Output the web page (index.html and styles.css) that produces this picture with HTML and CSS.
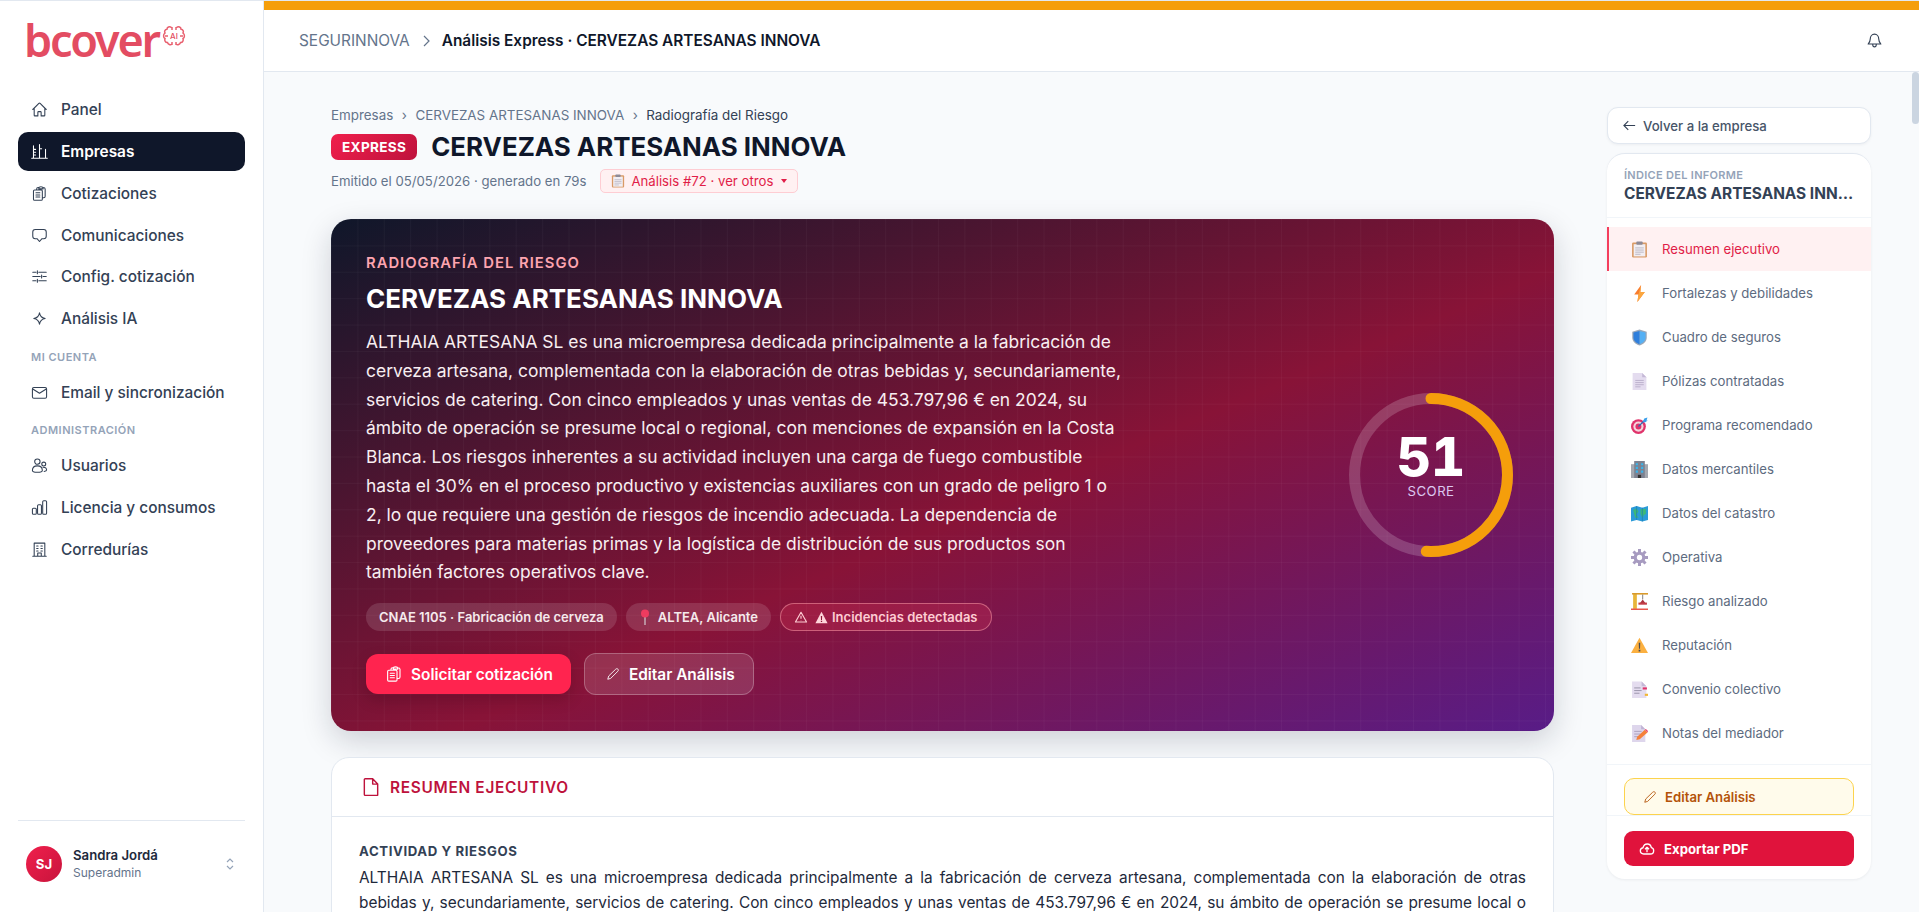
FILE: index.html
```html
<!DOCTYPE html>
<html lang="es">

<head>
    <meta charset="utf-8">
    <meta name="viewport" content="width=device-width, initial-scale=1.0">
    <title>bcover - Radiografía del Riesgo</title>
    <link rel="stylesheet" href="styles.css">
</head>

<body>
    <svg class="defs" width="0" height="0">
        <symbol id="i-home" viewBox="0 0 24 24"><path d="M2.5 12l8.6-8.6c.5-.5 1.3-.5 1.8 0l8.6 8.6M4.5 10v10c0 .6.5 1 1 1h4.2v-5c0-.6.5-1 1-1h2.6c.5 0 1 .4 1 1v5h4.200c.5 0 1-.4 1-1V10"/></symbol>
        <symbol id="i-empresas" viewBox="0 0 24 24"><path d="M1 21.500h22M3.500 21V4M12 21V2M20.500 21V9M3.500 9h3M3.500 13h3M3.500 17h3M12 8h3"/></symbol>
        <symbol id="i-cotiza" viewBox="0 0 24 24"><path d="M8 7V5.500C8 4.400 8.800 3.700 10 3.600h1M17 3.600c1.400.1 3 .7 3 2V16c0 1.200-1 2-2 2h-2M11 4.500C11 3 12 2.500 14 2.500s3 .5 3 2v1h-6zM5 7h9.500c.8 0 1.500.7 1.500 1.500V20c0 .8-.7 1.500-1.500 1.500H5c-.8 0-1.500-.7-1.500-1.500V8.500C3.500 7.700 4.200 7 5 7zM7 11h5.500M7 14h5.500M7 17h5.500"/></symbol>
        <symbol id="i-chat" viewBox="0 0 24 24"><path d="M6 3.500h12c2.200 0 3.500 1.400 3.500 3.500v6c0 2.100-1.300 3.500-3.500 3.500h-2.500L12 20.500l-3.500-4H6c-2.200 0-3.500-1.400-3.500-3.500V7c0-2.100 1.300-3.500 3.500-3.500z"/></symbol>
        <symbol id="i-sliders" viewBox="0 0 24 24"><path d="M11 6h10.500M2.500 6H7M17 12h4.500M2.500 12H13M11 18h10.500M2.500 18H7M9 4v4M15 10v4M9 16v4"/></symbol>
        <symbol id="i-spark" viewBox="0 0 24 24"><path d="M12 4c.8 4.800 3.200 7.200 8 8-4.800.8-7.200 3.200-8 8-.8-4.800-3.200-7.200-8-8 4.800-.8 7.200-3.200 8-8z"/></symbol>
        <symbol id="i-mail" viewBox="0 0 24 24"><rect x="2" y="5" width="20" height="15" rx="2"/><path d="M2.500 7l9.500 6 9.500-6"/></symbol>
        <symbol id="i-users" viewBox="0 0 24 24"><circle cx="9" cy="6.500" r="3.800"/><circle cx="18" cy="10" r="2.800"/><path d="M2 19c0-4 3-6.500 7-6.500s7 2.500 7 6.500c0 1.500-3 2.500-7 2.500S2 20.500 2 19zM17 14.500c3 0 5 1.500 5 4 0 1-1.200 1.800-3.500 2"/></symbol>
        <symbol id="i-bars" viewBox="0 0 24 24"><rect x="2" y="13" width="5.500" height="8.500" rx="1.500"/><rect x="9.250" y="8" width="5.500" height="13.500" rx="1.500"/><rect x="16.500" y="2.500" width="5.500" height="19" rx="1.500"/></symbol>
        <symbol id="i-office" viewBox="0 0 24 24"><path d="M2.500 21.500h19M4.500 21.500V3h15v18.500M9.500 21.500V17h5v4.500M8 7h2M14 7h2M8 10.500h2M14 10.500h2M8 14h2M14 14h2"/></symbol>
        <symbol id="i-pencil" viewBox="0 0 24 24"><path d="M16.800 3.600c1-1 2.600-1 3.600 0s1 2.600 0 3.600L8 19.500l-5 1.500 1.500-5z"/></symbol>

        <symbol id="e-clipboard" viewBox="0 0 16 16"><rect x="1" y="1.500" width="14" height="14" rx="1.200" fill="#d99a66"/><rect x="2.500" y="3" width="11" height="11.500" fill="#f1eef3"/><rect x="5" y=".5" width="6" height="3" rx=".8" fill="#8d8a96"/><path d="M4 6.500h8M4 8.500h8M4 10.500h8M4 12.500h5" stroke="#b5b0bd" stroke-width=".8"/></symbol>
        <symbol id="e-bolt" viewBox="0 0 16 16"><path d="M9.500 0L3 9h4l-1 7 7-9.500H8.800z" fill="#f97d2e"/><path d="M9.500 0L7 9l-1 7 7-9.500H8.800z" fill="#fba73f"/></symbol>
        <symbol id="e-shield" viewBox="0 0 16 16"><path d="M8 .5L14.800 2.500V8c0 3.800-3 6.300-6.800 7.500C4.200 14.300 1.200 11.800 1.200 8V2.500z" fill="#9aa7b8"/><path d="M8 1.800L13.700 3.400V8c0 3-2.500 5.200-5.700 6.300z" fill="#55b0f4"/><path d="M8 1.800L2.300 3.400V8c0 3 2.500 5.200 5.700 6.300z" fill="#2f7fdc"/></symbol>
        <symbol id="e-page" viewBox="0 0 16 16"><path d="M1.500 0H10.500L14.500 4V16H1.500z" fill="#e4dcef"/><path d="M10.500 0L14.500 4H10.500z" fill="#c4b8d6"/><path d="M4 7h8M4 9h8M4 11h8M4 13h5" stroke="#b6abc7" stroke-width=".8"/></symbol>
        <symbol id="e-target" viewBox="0 0 16 16"><circle cx="7" cy="9" r="7" fill="#e0336b"/><circle cx="7" cy="9" r="4.800" fill="#f3d5dc"/><circle cx="7" cy="9" r="2.800" fill="#e0336b"/><path d="M7 9L14 2" stroke="#2c6fb8" stroke-width="1.200"/><path d="M12.500 1.500L15.500 .5 14.500 3.500 16 3 13.500 5 11 5z" fill="#3aa0ea"/></symbol>
        <symbol id="e-building" viewBox="0 0 16 16"><rect x="0" y="3" width="16" height="13" fill="#a4a8b0"/><rect x="3" y="0" width="10" height="16" fill="#7d8290"/><path d="M4.500 2h2v2h-2zM9.500 2h2v2h-2zM4.500 5.500h2v2h-2zM9.500 5.500h2v2h-2zM4.500 9h2v2h-2zM9.500 9h2v2h-2z" fill="#37b5ee"/><rect x="6.500" y="13" width="3" height="3" fill="#333"/></symbol>
        <symbol id="e-map" viewBox="0 0 16 16"><path d="M0 2.500L5.300 1 10.700 2.500 16 1V14L10.700 15.500 5.300 14 0 15.500z" fill="#2b9bd8"/><path d="M2 5l3-2 2 3-2 3 2 3-3 0zM9 4l5-.5 0 5-2 1-1 3-2-4z" fill="#3cb878"/><path d="M5.300 1V14M10.700 2.500V15.500" stroke="#1c78b0" stroke-width=".6"/></symbol>
        <symbol id="e-gear" viewBox="0 0 16 16"><circle cx="8" cy="8" r="5.500" fill="#a79bc0"/><path d="M8 0v16M0 8h16M2.300 2.300l11.400 11.400M13.700 2.300L2.300 13.700" stroke="#a79bc0" stroke-width="2.800"/><circle cx="8" cy="8" r="2.500" fill="#fff"/></symbol>
        <symbol id="e-crane" viewBox="0 0 16 16"><rect x="2" y="1" width="3.500" height="14" fill="#e8b53a"/><rect x="1" y="0" width="15" height="1.500" fill="#d99a2b"/><rect x="0" y="14.600" width="16" height="1.400" fill="#e8564c"/><path d="M11 1.500V6" stroke="#555" stroke-width=".7"/><path d="M8 10l3-4 3 4z" fill="#a8323e"/><rect x="7" y="9" width="8" height="2" fill="#c43c46"/></symbol>
        <symbol id="e-warn" viewBox="0 0 16 16"><path d="M8 .8L16 15H0z" fill="#fbb040"/><path d="M7.300 5.500h1.400l-.2 5.500h-1zM7.200 12h1.600v1.600H7.200z" fill="#4a4a52"/></symbol>
        <symbol id="e-ribbon" viewBox="0 0 16 16"><path d="M1 .5H10L14.500 5V16H1z" fill="#e4dcef"/><path d="M10 .5L14.500 5H10z" fill="#c4b8d6"/><path d="M3 6.500h6M3 9h7M3 11.500h5" stroke="#8f8aa0" stroke-width=".8"/><rect x="11" y="6" width="4" height="2" fill="#e0336b"/><rect x="13" y="12" width="3" height="2" fill="#f2b632"/></symbol>
        <symbol id="e-memo" viewBox="0 0 16 16"><path d="M1 0H9.500L13.500 4V16H1z" fill="#ded6ec"/><path d="M9.500 0L13.500 4H9.500z" fill="#c0b3d4"/><path d="M3 6h7M3 8.500h6M3 11h4" stroke="#a49ab8" stroke-width=".8"/><path d="M5 14l.8-3L13 4.500l2.500 2.500-7.300 6.500z" fill="#f5813a"/><path d="M13 4.500l1-.8 2 2-.5 1.300z" fill="#e8456b"/></symbol>
    </svg>

    <div class="app">
        <aside class="sidebar">
            <div class="logo">
                <span class="logo-text">bcover</span>
                <span class="logo-brain">
                    <svg viewBox="0 0 24 24">
                        <path d="M9.500 3.500C7.500 2 5 3 5 5.200 3 5.500 2 7.500 3 9 1 10.500 1.200 13.500 3 14.500 2.200 16.500 3.500 18.800 5.500 18.500 6 20.500 8.500 21.500 10 20M14.500 3.500C16.500 2 19 3 19 5.200 21 5.500 22 7.500 21 9 23 10.500 22.800 13.500 21 14.500 21.800 16.500 20.500 18.800 18.500 18.500 18 20.500 15.500 21.500 14 20M10 3v3M14 3v3M3 12h3M18 12h3M10 18v3M14 18v3"/>
                    </svg>
                    <b>AI</b>
                </span>
            </div>

            <nav class="menu">
                <a class="menu-item"><svg class="ico"><use href="#i-home"/></svg>Panel</a>
                <a class="menu-item activo"><svg class="ico"><use href="#i-empresas"/></svg>Empresas</a>
                <a class="menu-item"><svg class="ico"><use href="#i-cotiza"/></svg>Cotizaciones</a>
                <a class="menu-item"><svg class="ico"><use href="#i-chat"/></svg>Comunicaciones</a>
                <a class="menu-item"><svg class="ico"><use href="#i-sliders"/></svg>Config. cotización</a>
                <a class="menu-item"><svg class="ico"><use href="#i-spark"/></svg>Análisis IA</a>
                <p class="menu-titulo">MI CUENTA</p>
                <a class="menu-item"><svg class="ico"><use href="#i-mail"/></svg>Email y sincronización</a>
                <p class="menu-titulo">ADMINISTRACIÓN</p>
                <a class="menu-item"><svg class="ico"><use href="#i-users"/></svg>Usuarios</a>
                <a class="menu-item"><svg class="ico"><use href="#i-bars"/></svg>Licencia y consumos</a>
                <a class="menu-item"><svg class="ico"><use href="#i-office"/></svg>Corredurías</a>
            </nav>

            <div class="usuario">
                <span class="avatar">SJ</span>
                <div class="usuario-datos">
                    <strong>Sandra Jordá</strong>
                    <span>Superadmin</span>
                </div>
                <svg class="selector" viewBox="0 0 10 16"><path d="M2 6l3-3 3 3M2 10l3 3 3-3"/></svg>
            </div>
        </aside>

        <div class="principal">
            <div class="franja"></div>
            <header class="topbar">
                <span class="top-org">SEGURINNOVA</span>
                <svg class="top-sep" viewBox="0 0 10 14"><path d="M3 2l5 5-5 5"/></svg>
                <span class="top-titulo">Análisis Express · CERVEZAS ARTESANAS INNOVA</span>
                <svg class="campana" viewBox="0 0 24 24"><path d="M6 10c0-4 2.500-7 6-7s6 3 6 7c0 3 1 5 3 7H3c2-2 3-4 3-7zM9.500 17.500c0 2 1 3.500 2.500 3.500s2.500-1.500 2.500-3.500"/></svg>
            </header>

            <div class="zona">
                <main class="contenido">
                    <div class="migas">
                        <span>Empresas</span><i>›</i><span>CERVEZAS ARTESANAS INNOVA</span><i>›</i><span class="miga-actual">Radiografía del Riesgo</span>
                    </div>
                    <div class="cabecera">
                        <span class="badge">EXPRESS</span>
                        <h1>CERVEZAS ARTESANAS INNOVA</h1>
                    </div>
                    <div class="meta">
                        <span>Emitido el 05/05/2026 · generado en 79s</span>
                        <span class="meta-pill"><svg class="emoji"><use href="#e-clipboard"/></svg>Análisis #72 · ver otros<i class="flechita"></i></span>
                    </div>

                    <section class="hero">
                        <div class="hero-texto">
                            <p class="hero-eyebrow">RADIOGRAFÍA DEL RIESGO</p>
                            <h2>CERVEZAS ARTESANAS INNOVA</h2>
                            <p class="hero-resumen">ALTHAIA ARTESANA SL es una microempresa dedicada principalmente a la fabricación de cerveza artesana, complementada con la elaboración de otras bebidas y, secundariamente, servicios de catering. Con cinco empleados y unas ventas de 453.797,96 € en 2024, su ámbito de operación se presume local o regional, con menciones de expansión en la Costa Blanca. Los riesgos inherentes a su actividad incluyen una carga de fuego combustible hasta el 30% en el proceso productivo y existencias auxiliares con un grado de peligro 1 o 2, lo que requiere una gestión de riesgos de incendio adecuada. La dependencia de proveedores para materias primas y la logística de distribución de sus productos son también factores operativos clave.</p>
                            <div class="chips">
                                <span class="chip">CNAE 1105 · Fabricación de cerveza</span>
                                <span class="chip chip-lugar"><svg class="chip-pin" viewBox="0 0 12 16"><path d="M6 8v8" stroke="#cbb6bd" stroke-width="1.400"/><circle cx="6" cy="4.500" r="4" fill="#ee3b5f"/></svg>ALTEA, Alicante</span>
                                <span class="chip chip-alerta">
                                    <svg class="chip-tri" viewBox="0 0 24 24"><path d="M12 4l9.500 16.500h-19zM12 10v5M12 17.500v.5"/></svg>
                                    <svg class="chip-warn" viewBox="0 0 16 16"><path d="M8 1l7.500 14H.5z" fill="#ffd5da"/><path d="M7.200 6h1.600l-.2 5H7.400zM7.200 12h1.600v1.500H7.200z" fill="#8a1535"/></svg>
                                    Incidencias detectadas
                                </span>
                            </div>
                            <div class="acciones">
                                <a class="btn-rojo"><svg class="ico"><use href="#i-cotiza"/></svg>Solicitar cotización</a>
                                <a class="btn-vidrio"><svg class="ico"><use href="#i-pencil"/></svg>Editar Análisis</a>
                            </div>
                        </div>
                        <div class="score">
                            <svg viewBox="0 0 164 164">
                                <circle class="score-fondo" cx="82" cy="82" r="76.500"/>
                                <circle class="score-valor" cx="82" cy="82" r="76.500" pathLength="100" stroke-dasharray="51 100" transform="rotate(-90 82 82)"/>
                            </svg>
                            <div class="score-texto">
                                <strong>51</strong>
                                <span>SCORE</span>
                            </div>
                        </div>
                    </section>

                    <section class="tarjeta">
                        <div class="tarjeta-cab">
                            <svg viewBox="0 0 24 24"><path d="M5 2h9l6 6.500V22H5c-.6 0-1-.4-1-1V3c0-.6.4-1 1-1zM14 2v6.500h6"/></svg>
                            <h3>RESUMEN EJECUTIVO</h3>
                        </div>
                        <div class="tarjeta-cuerpo">
                            <h4>ACTIVIDAD Y RIESGOS</h4>
                            <p>ALTHAIA ARTESANA SL es una microempresa dedicada principalmente a la fabricación de cerveza artesana, complementada con la elaboración de otras bebidas y, secundariamente, servicios de catering. Con cinco empleados y unas ventas de 453.797,96 € en 2024, su ámbito de operación se presume local o regional, con menciones de expansión en la Costa Blanca. Los riesgos inherentes a su actividad incluyen una carga de fuego combustible hasta el 30% en el proceso productivo y existencias auxiliares con un grado de peligro 1 o 2, lo que requiere una gestión de riesgos de incendio adecuada.</p>
                        </div>
                    </section>
                </main>

                <aside class="lateral">
                    <a class="volver"><svg viewBox="0 0 24 24"><path d="M21 12H4M10 5l-7 7 7 7"/></svg>Volver a la empresa</a>
                    <div class="indice">
                        <div class="indice-cab">
                            <span>ÍNDICE DEL INFORME</span>
                            <strong>CERVEZAS ARTESANAS INNOVA</strong>
                        </div>
                        <ul class="indice-lista">
                            <li class="actual"><svg class="emoji"><use href="#e-clipboard"/></svg>Resumen ejecutivo</li>
                            <li><svg class="emoji"><use href="#e-bolt"/></svg>Fortalezas y debilidades</li>
                            <li><svg class="emoji"><use href="#e-shield"/></svg>Cuadro de seguros</li>
                            <li><svg class="emoji"><use href="#e-page"/></svg>Pólizas contratadas</li>
                            <li><svg class="emoji"><use href="#e-target"/></svg>Programa recomendado</li>
                            <li><svg class="emoji"><use href="#e-building"/></svg>Datos mercantiles</li>
                            <li><svg class="emoji"><use href="#e-map"/></svg>Datos del catastro</li>
                            <li><svg class="emoji"><use href="#e-gear"/></svg>Operativa</li>
                            <li><svg class="emoji"><use href="#e-crane"/></svg>Riesgo analizado</li>
                            <li><svg class="emoji"><use href="#e-warn"/></svg>Reputación</li>
                            <li><svg class="emoji"><use href="#e-ribbon"/></svg>Convenio colectivo</li>
                            <li><svg class="emoji"><use href="#e-memo"/></svg>Notas del mediador</li>
                        </ul>
                        <div class="indice-editar">
                            <a class="btn-editar"><svg class="ico"><use href="#i-pencil"/></svg>Editar Análisis</a>
                        </div>
                        <div class="indice-pdf">
                            <a class="btn-pdf">
                                <svg viewBox="0 0 24 24"><path d="M7 19.500c-3 0-5-2-5-4.700 0-2.400 1.700-4.300 4-4.700C6.800 6.800 9.200 4.500 12.300 4.500c3.300 0 5.700 2.300 6.200 5.500 2.100.4 3.500 2.300 3.500 4.500 0 2.900-2 5-5 5zM12 17v-7M9 12.500l3-3 3 3"/></svg>
                                Exportar PDF
                            </a>
                        </div>
                    </div>
                </aside>

                <div class="barra"><div class="barra-thumb"></div></div>
            </div>
        </div>
    </div>
</body>

</html>
```

FILE: styles.css
```css
* {
    box-sizing: border-box;
}

html,
body {
    height: 100%;
    margin: 0;
    overflow: hidden;
}

body {
    font-family: Inter, "Liberation Sans", sans-serif;
    background-color: #f8fafc;
    color: #0f172a;
    border-top: 1px solid #e2e8f0;
}

.defs {
    position: absolute;
}

.app {
    display: flex;
    height: 100%;
}

.ico {
    width: 18px;
    height: 18px;
    flex-shrink: 0;
    fill: none;
    stroke: currentColor;
    stroke-width: 1.5;
    stroke-linecap: round;
    stroke-linejoin: round;
}

.emoji {
    width: 17px;
    height: 17px;
    flex-shrink: 0;
}

/* sidebar */

.sidebar {
    width: 264px;
    flex-shrink: 0;
    display: flex;
    flex-direction: column;
    background-color: #fff;
    border-right: 1px solid #e2e8f0;
    padding: 0 18px;
}

.logo {
    display: flex;
    height: 86px;
    padding-left: 6px;
    padding-top: 11px;
    align-items: flex-start;
}

.logo-text {
    font-family: "Noto Sans", sans-serif;
    font-size: 45px;
    line-height: 56px;
    letter-spacing: -2.200px;
    font-weight: 600;
    color: #e34c62;
}

.logo-brain {
    position: relative;
    width: 24px;
    height: 24px;
    margin-top: 12px;
    margin-left: 3px;
}

.logo-brain svg {
    width: 24px;
    height: 24px;
    fill: none;
    stroke: #e8606f;
    stroke-width: 1.5;
}

.logo-brain b {
    position: absolute;
    left: 0;
    right: 0;
    top: 7px;
    text-align: center;
    font-size: 8px;
    line-height: 10px;
    font-weight: 500;
    color: #e34c62;
}

.menu {
    display: flex;
    flex-direction: column;
    margin-top: 3px;
}

.menu-item {
    display: flex;
    align-items: center;
    gap: 13px;
    height: 39px;
    margin-bottom: 2.850px;
    padding-left: 13px;
    border-radius: 10px;
    font-size: 15.4px;
    font-weight: 500;
    color: #334155;
}

.menu-item .ico {
    width: 17px;
    height: 17px;
}

.activo {
    background-color: #0f172a;
    color: #fff;
    font-weight: 600;
}

.menu-titulo {
    margin: 0;
    padding: 9px 13px 0;
    height: 31.500px;
    font-size: 11px;
    line-height: 14px;
    font-weight: 600;
    letter-spacing: .5px;
    color: #94a3b8;
}

.usuario {
    display: flex;
    align-items: center;
    gap: 11px;
    margin-top: auto;
    height: 92px;
    padding: 0 8px 5px;
    border-top: 1px solid #e2e8f0;
}

.avatar {
    width: 36px;
    height: 36px;
    flex-shrink: 0;
    display: flex;
    align-items: center;
    justify-content: center;
    border-radius: 50%;
    background: linear-gradient(135deg, #f01f4c, #c8143c);
    color: #fff;
    font-size: 13.200px;
    font-weight: 700;
}

.usuario-datos {
    display: flex;
    flex-direction: column;
    gap: 1px;
    flex-grow: 1;
}

.usuario-datos strong {
    font-size: 13.200px;
    line-height: 17px;
    font-weight: 600;
    color: #1e293b;
}

.usuario-datos span {
    font-size: 12px;
    line-height: 16px;
    color: #64748b;
}

.selector {
    width: 10px;
    height: 16px;
    margin-right: 2px;
    fill: none;
    stroke: #94a3b8;
    stroke-width: 1.2;
}

/* barra superior */

.principal {
    flex-grow: 1;
    min-width: 0;
    display: flex;
    flex-direction: column;
}

.franja {
    height: 9px;
    flex-shrink: 0;
    background-color: #f59e0b;
}

.topbar {
    height: 62px;
    flex-shrink: 0;
    display: flex;
    align-items: center;
    padding: 0 36px 0 35px;
    background-color: #fff;
    border-bottom: 1px solid #e2e8f0;
    font-size: 15.4px;
}

.top-org {
    color: #64748b;
}

.top-sep {
    width: 10px;
    height: 14px;
    margin: 0 11px;
    fill: none;
    stroke: #64748b;
    stroke-width: 1.2;
}

.top-titulo {
    font-weight: 600;
    color: #0f172a;
}

.campana {
    width: 17px;
    height: 17px;
    margin-left: auto;
    fill: none;
    stroke: #334155;
    stroke-width: 1.6;
    stroke-linejoin: round;
}

/* contenido */

.zona {
    flex-grow: 1;
    min-height: 0;
    display: flex;
    overflow: hidden;
    padding-left: 67px;
}

.contenido {
    width: 1223px;
    flex-shrink: 0;
    padding-top: 34px;
}

.migas {
    display: flex;
    align-items: center;
    gap: 8.500px;
    height: 18px;
    font-size: 13.400px;
    color: #64748b;
}

.migas i {
    font-style: normal;
}

.miga-actual {
    color: #334155;
}

.cabecera {
    display: flex;
    align-items: center;
    gap: 14px;
    margin-top: 7px;
}

.badge {
    display: flex;
    align-items: center;
    height: 26px;
    padding: 0 11px;
    border-radius: 7px;
    background: linear-gradient(135deg, #f01f4c, #be123c);
    color: #fff;
    font-size: 13.600px;
    font-weight: 700;
    letter-spacing: .3px;
}

.cabecera h1 {
    margin: 0;
    font-size: 25.900px;
    line-height: 32px;
    font-weight: 700;
    color: #0f172a;
}

.meta {
    display: flex;
    align-items: center;
    gap: 14px;
    margin-top: 6px;
    font-size: 13.200px;
    color: #64748b;
}

.meta-pill {
    display: flex;
    align-items: center;
    gap: 6px;
    height: 24px;
    padding: 0 10px;
    border: 1px solid #fecdd3;
    border-radius: 5px;
    background-color: #fff1f2;
    color: #e11d48;
}

.meta-pill .emoji {
    width: 14px;
    height: 14px;
}

.flechita {
    width: 0;
    height: 0;
    margin-left: 2px;
    border: 3px solid transparent;
    border-top: 4px solid #e11d48;
    border-bottom: 0;
}

.hero {
    display: flex;
    justify-content: space-between;
    height: 512px;
    margin-top: 26px;
    padding: 34px 41px 0 35px;
    border-radius: 20px;
    color: #fff;
    background-image:
        linear-gradient(rgba(255, 255, 255, .03) 1px, transparent 1px),
        linear-gradient(90deg, rgba(255, 255, 255, .03) 1px, transparent 1px),
        linear-gradient(to bottom right, #0f172a 0%, #881337 55%, #581c87 100%);
    background-size: 26.400px 26.400px, 26.400px 26.400px, 100% 100%;
    box-shadow: 0 10px 30px rgba(15, 23, 42, .18);
}

.hero-texto {
    width: 758px;
}

.hero-eyebrow {
    margin: 0;
    font-size: 14.800px;
    line-height: 20px;
    font-weight: 600;
    letter-spacing: 1px;
    color: #fda4af;
}

.hero h2 {
    margin: 10px 0 0;
    font-size: 26px;
    line-height: 32px;
    font-weight: 700;
}

.hero-resumen {
    margin: 13px 0 0;
    font-size: 17.450px;
    line-height: 28.800px;
    color: #f8eef1;
}

.chips {
    display: flex;
    align-items: center;
    gap: 9px;
    margin-top: 16px;
}

.chip {
    display: flex;
    align-items: center;
    gap: 5px;
    height: 28px;
    padding: 0 13px;
    border-radius: 14px;
    background-color: rgba(255, 255, 255, .13);
    font-size: 13px;
    font-weight: 600;
    color: #f5eaed;
}

.chip-lugar {
    gap: 7px;
}

.chip-pin {
    width: 12px;
    height: 16px;
}

.chip-alerta {
    background-color: rgba(244, 63, 94, .22);
    border: 1px solid rgba(253, 164, 175, .5);
    color: #fecdd3;
    font-weight: 600;
    gap: 4px;
}

.chip-tri {
    width: 14px;
    height: 14px;
    margin-right: 3px;
    fill: none;
    stroke: #fecdd3;
    stroke-width: 2;
    stroke-linejoin: round;
}

.chip-warn {
    width: 13px;
    height: 13px;
}

.acciones {
    display: flex;
    align-items: center;
    gap: 13px;
    margin-top: 22px;
}

.btn-rojo {
    display: flex;
    align-items: center;
    gap: 8px;
    height: 40px;
    padding: 0 18px 0 19px;
    border-radius: 12px;
    background-color: #ff244f;
    box-shadow: 0 6px 14px rgba(60, 0, 20, .25);
    font-size: 15.400px;
    font-weight: 600;
}

.btn-vidrio {
    display: flex;
    align-items: center;
    gap: 9px;
    height: 42px;
    padding: 0 18px 0 21px;
    border: 1px solid rgba(255, 255, 255, .25);
    border-radius: 12px;
    background-color: rgba(255, 255, 255, .13);
    font-size: 15.400px;
    font-weight: 600;
}

.btn-vidrio .ico {
    width: 14px;
    height: 14px;
}

.score {
    position: relative;
    width: 164px;
    height: 164px;
    margin-top: 140px;
}

.score svg {
    width: 164px;
    height: 164px;
    fill: none;
    stroke-width: 11;
}

.score-fondo {
    stroke: rgba(255, 255, 255, .18);
}

.score-valor {
    stroke: #f59e0b;
    stroke-linecap: round;
}

.score-texto {
    position: absolute;
    top: 38px;
    left: 0;
    right: 0;
    text-align: center;
}

.score-texto strong {
    display: block;
    font-size: 53px;
    line-height: 52px;
    font-weight: 800;
    font-variant-numeric: tabular-nums;
}

.score-texto span {
    display: block;
    font-size: 13.200px;
    line-height: 16px;
    letter-spacing: .5px;
    color: #dcc7f0;
}

.tarjeta {
    margin-top: 26px;
    border: 1px solid #e2e8f0;
    border-radius: 18px;
    background-color: #fff;
}

.tarjeta-cab {
    display: flex;
    align-items: center;
    gap: 9px;
    height: 59px;
    padding: 0 29px;
    border-bottom: 1px solid #e2e8f0;
}

.tarjeta-cab svg {
    width: 20px;
    height: 20px;
    fill: none;
    stroke: #be123c;
    stroke-width: 1.700;
    stroke-linejoin: round;
}

.tarjeta-cab h3 {
    margin: 0;
    font-size: 15.400px;
    font-weight: 600;
    letter-spacing: .7px;
    color: #be123c;
}

.tarjeta-cuerpo {
    padding: 25px 27px;
}

.tarjeta-cuerpo h4 {
    margin: 0 0 5px;
    font-size: 13.200px;
    line-height: 18px;
    font-weight: 700;
    letter-spacing: .6px;
    color: #334155;
}

.tarjeta-cuerpo p {
    margin: 0;
    font-size: 15.400px;
    line-height: 25px;
    text-align: justify;
    color: #1e293b;
}

/* columna lateral */

.lateral {
    width: 264px;
    flex-shrink: 0;
    margin-left: 53px;
    padding-top: 35px;
}

.volver {
    display: flex;
    align-items: center;
    gap: 6px;
    height: 37px;
    padding-left: 14px;
    border: 1px solid #e2e8f0;
    border-radius: 11px;
    background-color: #fff;
    font-size: 13.200px;
    font-weight: 500;
    color: #475569;
    box-shadow: 0 1px 3px rgba(15, 23, 42, .05);
}

.volver svg {
    width: 15px;
    height: 15px;
    fill: none;
    stroke: #334155;
    stroke-width: 1.700;
}

.indice {
    margin-top: 9px;
    border-top: 1px solid #e2e8f0;
    border-radius: 18px;
    background-color: #fff;
    box-shadow: 0 1px 3px rgba(15, 23, 42, .06);
}

.indice-cab {
    display: flex;
    flex-direction: column;
    height: 64px;
    padding: 14px 17px 0;
    border-bottom: 1px solid #f1f5f9;
}

.indice-cab span {
    font-size: 11px;
    line-height: 15px;
    font-weight: 600;
    letter-spacing: .3px;
    color: #94a3b8;
}

.indice-cab strong {
    margin-top: 1px;
    overflow: hidden;
    white-space: nowrap;
    text-overflow: ellipsis;
    font-size: 15.400px;
    line-height: 19px;
    font-weight: 700;
    color: #334155;
}

.indice-lista {
    margin: 0;
    padding: 9px 0;
    list-style: none;
}

.indice-lista li {
    display: flex;
    align-items: center;
    gap: 14px;
    height: 44px;
    padding-left: 22px;
    border-left: 2px solid transparent;
    font-size: 13.200px;
    color: #5d6b80;
}

.indice-lista .actual {
    border-left-color: #f43f5e;
    background-color: #fff1f2;
    color: #e11d48;
}

.indice-editar {
    padding: 13px 17px 0;
    border-top: 1px solid #f1f5f9;
}

.btn-editar {
    display: flex;
    align-items: center;
    gap: 8px;
    height: 37px;
    padding-left: 18px;
    border: 1px solid #fcd34d;
    border-radius: 10px;
    background-color: #fffbeb;
    font-size: 13.200px;
    font-weight: 600;
    color: #b45309;
}

.btn-editar .ico {
    width: 14px;
    height: 14px;
}

.indice-pdf {
    padding: 15px 17px 13px;
    border-top: 1px solid #f1f5f9;
}

.btn-pdf {
    display: flex;
    align-items: center;
    gap: 9px;
    height: 35px;
    padding-left: 15px;
    border-radius: 9px;
    background-color: #e0133c;
    font-size: 13.200px;
    font-weight: 700;
    color: #fff;
}

.btn-pdf svg {
    width: 16px;
    height: 16px;
    fill: none;
    stroke: #fff;
    stroke-width: 2;
    stroke-linejoin: round;
}

.barra {
    width: 7px;
    flex-shrink: 0;
    margin-left: auto;
    background-color: #f8fafc;
}

.barra-thumb {
    height: 52px;
    border-radius: 4px;
    background-color: #cbd5e1;
}
```
